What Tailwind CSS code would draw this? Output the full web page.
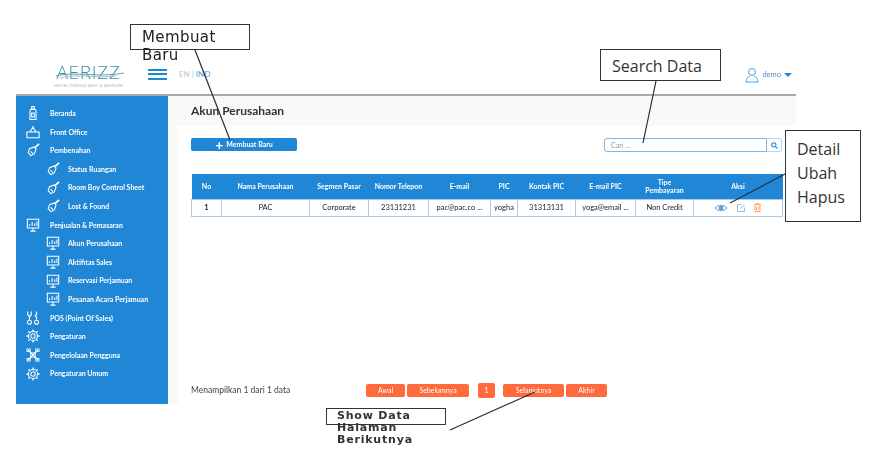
<!DOCTYPE html>
<html lang="en">
<head>
    <meta charset="UTF-8">
    <title>Akun Perusahaan</title>
    <script src="https://cdn.jsdelivr.net/npm/@tailwindcss/browser@4"></script>
</head>
<body class="bg-white">
    <svg class="hidden">
        <symbol id="i-bottle" viewBox="0 0 16 16"><path d="M6.500 0.500h3v3h-3zM5 4h6l0.500 2v9.500h-7V6zM6.500 8h3v4.500h-3z" fill="none" stroke="currentColor" stroke-width="1.200"/></symbol>
        <symbol id="i-desk" viewBox="0 0 16 16"><path d="M1 8h14v6.500H1zM4.500 8L8 2.500 11.500 8M8 2.500V1" fill="none" stroke="currentColor" stroke-width="1.200"/></symbol>
        <symbol id="i-brush" viewBox="0 0 16 16"><path d="M15 1L10.500 5" stroke="currentColor" stroke-width="2"/><path d="M9.500 4.500l2 2.500-2 5.500-4 2-3-3.500 1.500-4.500zM5 9.500l3 2.500" fill="none" stroke="currentColor" stroke-width="1.200"/></symbol>
        <symbol id="i-board" viewBox="0 0 16 16"><path d="M1.500 1.500h13v10h-13zM8 11.500v3.500M5 15h6M4 9V7M7 9V4.500M10 9V6M12.500 9V4" fill="none" stroke="currentColor" stroke-width="1.200"/></symbol>
        <symbol id="i-tools" viewBox="0 0 16 16"><path d="M2 0.500v4l2 2 2-2v-4M4 6.500V10M12 0.500V4l-1.500 1.500L12 7v3" fill="none" stroke="currentColor" stroke-width="1.300"/><circle cx="4" cy="12.800" r="2.300" fill="none" stroke="currentColor" stroke-width="1.200"/><circle cx="12" cy="12.800" r="2.300" fill="none" stroke="currentColor" stroke-width="1.200"/></symbol>
        <symbol id="i-gear" viewBox="0 0 16 16"><circle cx="8" cy="8" r="2.500" fill="none" stroke="currentColor" stroke-width="1.200"/><circle cx="8" cy="8" r="5.200" fill="none" stroke="currentColor" stroke-width="1.200"/><path d="M8 0.500v2M8 13.500v2M0.500 8h2M13.500 8h2M2.700 2.700l1.400 1.400M11.900 11.900l1.400 1.400M2.700 13.300l1.400-1.400M11.900 4.100l1.400-1.400" stroke="currentColor" stroke-width="1.500"/></symbol>
        <symbol id="i-cross" viewBox="0 0 16 16"><path d="M2 2l12 12M14 2L2 14" stroke="currentColor" stroke-width="1.300"/><path d="M1 1h4v3H1zM11 1h4v3h-4zM1 12h4v3H1zM11 12h4v3h-4zM5.500 5.500h5v5h-5z" fill="none" stroke="currentColor" stroke-width="1"/></symbol>
    </svg>

    <div class="relative w-[886px] h-[464px] overflow-hidden font-['Lato',sans-serif] blur-[0.5px]">
        <div class="ml-4 mr-[90px] pt-[50px]">
            <!-- top bar -->
            <header class="h-[46px] flex items-center border-b-2 border-[#a9a9a9] bg-white">
                <div class="relative w-[132px] flex flex-col items-center mt-[9px] pl-[13px]">
                    <span class="text-[#3a8f9e] text-[19px] leading-[15px] font-light tracking-[0.7px] font-['Open_Sans',sans-serif]">AERIZZ</span>
                    <span class="mt-[3px] text-[#b5b5b5] text-[4.500px] leading-[6px] uppercase">Hotel Consultant &amp; Advisor</span>
                    <svg class="absolute left-[40px] top-[5px] w-[68px] h-[9px]" viewBox="0 0 68 9" fill="none" stroke-width="1">
                        <path d="M0 6C18 1 44 8 68 3" stroke="#4fa7b5"/>
                        <path d="M4 8C22 3 40 9 60 6" stroke="#b9b9b9"/>
                    </svg>
                </div>
                <div class="flex flex-col gap-[2.500px] mt-[4px]">
                    <span class="block w-[19px] h-[2px] bg-[#2087d6]"></span>
                    <span class="block w-[19px] h-[2px] bg-[#2087d6]"></span>
                    <span class="block w-[19px] h-[2px] bg-[#2087d6]"></span>
                </div>
                <div class="ml-[12px] mt-[4px] text-[8px] text-[#b9c4cc]">EN | <span class="text-[#4a9ee0]">IND</span></div>
                <div class="ml-auto mr-[4px] mt-[6px] flex items-center gap-[3px] text-[#4a9ee0]">
                    <svg class="w-[14px] h-[16px]" viewBox="0 0 14 16" fill="none" stroke="currentColor"><circle cx="7" cy="5" r="3.500"/><path d="M1 15c0-4 2-5 3.500-5.500M13 15c0-4-2-5-3.500-5.500M1 15h12"/></svg>
                    <span class="text-[7.500px] text-[#5a8fc0]">demo</span>
                    <span class="w-0 h-0 border-x-[4px] border-x-transparent border-t-[4px] border-t-[#2087d6]"></span>
                </div>
            </header>

            <div class="flex h-[308px]">
                <!-- sidebar -->
                <nav class="w-[152px] shrink-0 bg-[#2087d6] pt-2 text-white text-[7px] font-bold">
                    <a class="h-[18.600px] flex items-center pl-[10px] gap-[10px]"><svg class="w-[14px] h-[14px]"><use href="#i-bottle"/></svg>Beranda</a>
                    <a class="h-[18.600px] flex items-center pl-[10px] gap-[10px]"><svg class="w-[14px] h-[14px]"><use href="#i-desk"/></svg>Front Office</a>
                    <a class="h-[18.600px] flex items-center pl-[10px] gap-[10px]"><svg class="w-[14px] h-[14px]"><use href="#i-brush"/></svg>Pembenahan</a>
                    <a class="h-[18.600px] flex items-center pl-[30px] gap-[8px]"><svg class="w-[14px] h-[14px]"><use href="#i-brush"/></svg>Status Ruangan</a>
                    <a class="h-[18.600px] flex items-center pl-[30px] gap-[8px]"><svg class="w-[14px] h-[14px]"><use href="#i-brush"/></svg>Room Boy Control Sheet</a>
                    <a class="h-[18.600px] flex items-center pl-[30px] gap-[8px]"><svg class="w-[14px] h-[14px]"><use href="#i-brush"/></svg>Lost &amp; Found</a>
                    <a class="h-[18.600px] flex items-center pl-[10px] gap-[10px]"><svg class="w-[14px] h-[14px]"><use href="#i-board"/></svg>Penjualan &amp; Pemasaran</a>
                    <a class="h-[18.600px] flex items-center pl-[30px] gap-[8px]"><svg class="w-[14px] h-[14px]"><use href="#i-board"/></svg>Akun Perusahaan</a>
                    <a class="h-[18.600px] flex items-center pl-[30px] gap-[8px]"><svg class="w-[14px] h-[14px]"><use href="#i-board"/></svg>Aktifitas Sales</a>
                    <a class="h-[18.600px] flex items-center pl-[30px] gap-[8px]"><svg class="w-[14px] h-[14px]"><use href="#i-board"/></svg>Reservasi Perjamuan</a>
                    <a class="h-[18.600px] flex items-center pl-[30px] gap-[8px]"><svg class="w-[14px] h-[14px]"><use href="#i-board"/></svg>Pesanan Acara Perjamuan</a>
                    <a class="h-[18.600px] flex items-center pl-[10px] gap-[10px]"><svg class="w-[14px] h-[14px]"><use href="#i-tools"/></svg>POS (Point Of Sales)</a>
                    <a class="h-[18.600px] flex items-center pl-[10px] gap-[10px]"><svg class="w-[14px] h-[14px]"><use href="#i-gear"/></svg>Pengaturan</a>
                    <a class="h-[18.600px] flex items-center pl-[10px] gap-[10px]"><svg class="w-[14px] h-[14px]"><use href="#i-cross"/></svg>Pengelolaan Pengguna</a>
                    <a class="h-[18.600px] flex items-center pl-[10px] gap-[10px]"><svg class="w-[14px] h-[14px]"><use href="#i-gear"/></svg>Pengaturan Umum</a>
                </nav>

                <!-- content -->
                <main class="flex-1 bg-[#f9f9f9] flex flex-col min-w-0">
                    <h1 class="h-[30px] pl-[23px] pt-[6px] text-[12px] leading-[18px] font-bold text-[#333]">Akun Perusahaan</h1>
                    <section class="flex-1 ml-[10px] bg-white pl-[13px] pr-[14px] flex flex-col">
                        <div class="flex justify-between mt-[12px]">
                            <button class="w-[106px] h-[13px] rounded-[2px] bg-[#2087d6] text-white text-[7px] font-bold flex items-center justify-center gap-[3px]"><span class="text-[14px] leading-[12px]">+</span>Membuat Baru</button>
                            <div class="flex h-[14px] w-[178px]">
                                <div class="flex-1 border border-[#7fb5e0] rounded-l-[3px] pl-[6px] text-[7px] leading-[12px] text-[#999]">Cari ...</div>
                                <div class="w-[15px] border border-l-0 border-[#b9d6ee] rounded-r-[3px] flex items-center justify-center text-[#2087d6]">
                                    <svg class="w-[7px] h-[7px]" viewBox="0 0 10 10" fill="none" stroke="currentColor" stroke-width="1.500"><circle cx="4" cy="4" r="3"/><path d="M6.500 6.500L9.500 9.500"/></svg>
                                </div>
                            </div>
                        </div>

                        <table class="mt-[22px] w-[591px] table-fixed border-collapse text-[7.500px] text-center text-[#222]">
                            <colgroup>
                                <col class="w-[30px]"><col class="w-[88px]"><col class="w-[59px]"><col class="w-[60px]"><col class="w-[62px]"><col class="w-[27px]"><col class="w-[58px]"><col class="w-[60px]"><col class="w-[58px]"><col class="w-[89px]">
                            </colgroup>
                            <thead class="bg-[#2087d6] text-white text-[7px] font-bold">
                                <tr class="h-[25px]">
                                    <th>No</th><th>Nama Perusahaan</th><th>Segmen Pasar</th><th>Nomor Telepon</th><th>E-mail</th><th>PIC</th><th>Kontak PIC</th><th>E-mail PIC</th><th class="leading-[8px]">Tipe<br>Pembayaran</th><th>Aksi</th>
                                </tr>
                            </thead>
                            <tbody>
                                <tr class="h-[17px]">
                                    <td class="border border-[#a9cdea] font-bold">1</td>
                                    <td class="border border-[#a9cdea]">PAC</td>
                                    <td class="border border-[#a9cdea]">Corporate</td>
                                    <td class="border border-[#a9cdea]">23131231</td>
                                    <td class="border border-[#a9cdea]">pac@pac.co ...</td>
                                    <td class="border border-[#a9cdea]">yogha</td>
                                    <td class="border border-[#a9cdea]">31313131</td>
                                    <td class="border border-[#a9cdea]">yoga@email ...</td>
                                    <td class="border border-[#a9cdea]">Non Credit</td>
                                    <td class="border border-[#a9cdea]">
                                        <div class="flex items-center justify-center gap-[9px] pr-[2px]">
                                            <svg class="w-[14px] h-[8px] text-[#5a9fd8]" viewBox="0 0 13 8" fill="none" stroke="currentColor"><path d="M0.500 4C3 0.500 10 0.500 12.500 4C10 7.500 3 7.500 0.500 4z"/><circle cx="6.500" cy="4" r="2" fill="currentColor"/></svg>
                                            <svg class="w-[8px] h-[8px] text-[#8fc0e6]" viewBox="0 0 8 8" fill="none" stroke="currentColor"><path d="M7.500 3.500v4h-7v-7h4M3.500 4.500L7.500 0.500"/></svg>
                                            <svg class="w-[7px] h-[9px] text-[#ffa76e]" viewBox="0 0 7 9" fill="none" stroke="currentColor"><path d="M0 1.500h7M2.500 1.500V0.500h2v1M1 2v6.500h5V2M2.500 3.500v3.500M4.500 3.500v3.500"/></svg>
                                        </div>
                                    </td>
                                </tr>
                            </tbody>
                        </table>

                        <div class="mt-auto mb-[6px] flex items-center h-[16px] text-[8.500px] text-[#444]">
                            <span class="w-[175px]">Menampilkan 1 dari 1 data</span>
                            <div class="flex items-center text-[7px] text-white">
                                <button class="w-[39px] h-[13px] rounded-[2px] bg-[#ff6b3d]">Awal</button>
                                <button class="ml-[2px] w-[62px] h-[13px] rounded-[2px] bg-[#ff6b3d]">Sebelumnya</button>
                                <button class="ml-[9px] w-[17px] h-[15px] rounded-[2px] bg-[#ff6b3d]">1</button>
                                <button class="ml-[8px] w-[61px] h-[13px] rounded-[2px] bg-[#ff6b3d]">Selanjutnya</button>
                                <button class="ml-[2px] w-[41px] h-[13px] rounded-[2px] bg-[#ff6b3d]">Akhir</button>
                            </div>
                        </div>
                    </section>
                </main>
            </div>
        </div>

        <!-- annotations laid over the screenshot -->
        <svg class="absolute inset-0 w-[886px] h-[464px] pointer-events-none" viewBox="0 0 886 464" fill="none" stroke="#2b2b3a" stroke-width="1.200">
            <path d="M195 50L230 140M656 81L643 143M785 174L730 203M450 430L535 392"/>
        </svg>
        <div class="absolute left-[130px] top-[24px] w-[120px] h-[26px] border border-[#333] bg-white"></div>
        <div class="absolute left-[142px] top-[28px] w-[90px] text-[15px] leading-[18px] tracking-[0.400px] font-['DejaVu_Sans',sans-serif] text-[#222]">Membuat<br>Baru</div>
        <div class="absolute left-[600px] top-[49px] w-[121px] h-[32px] border border-[#333] bg-white pl-[11px] pt-[5px] text-[16px] leading-[22px] font-['Open_Sans',sans-serif] text-[#333]">Search Data</div>
        <div class="absolute left-[785px] top-[130px] w-[76px] h-[92px] border border-[#333] bg-white pl-[11px] pt-[6px] text-[16px] leading-[24px] font-['Open_Sans',sans-serif] text-[#333]">Detail<br>Ubah<br>Hapus</div>
        <div class="absolute left-[326px] top-[408px] w-[120px] h-[17px] border border-[#333] bg-white"></div>
        <div class="absolute left-[337px] top-[410px] w-[100px] text-[11px] leading-[12px] font-['DejaVu_Sans',sans-serif] font-semibold text-[#333] tracking-[0.800px]">Show Data<br>Halaman<br>Berikutnya</div>
    </div>
</body>
</html>
